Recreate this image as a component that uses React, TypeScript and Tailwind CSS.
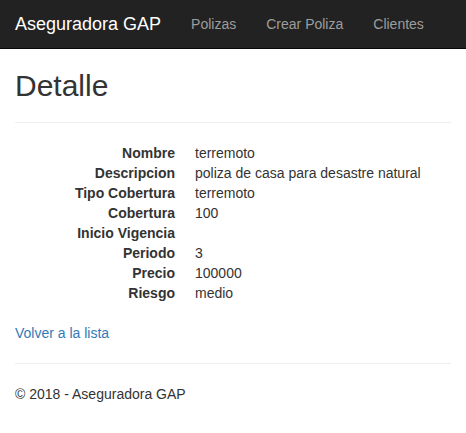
const fields: [string, string][] = [
  ['Nombre', 'terremoto'],
  ['Descripcion', 'poliza de casa para desastre natural'],
  ['Tipo Cobertura', 'terremoto'],
  ['Cobertura', '100'],
  ['Inicio Vigencia', ''],
  ['Periodo', '3'],
  ['Precio', '100000'],
  ['Riesgo', 'medio'],
];

export default function App() {
  return (
    <div className="min-h-screen bg-white font-['Liberation_Sans',Arial,sans-serif] text-[14px] leading-[20px] text-[#333]">
      <nav className="h-[49px] border-b border-[#080808] bg-[#222]">
        <div className="flex px-[15px]">
          <a href="#" className="py-[14px] pr-[15px] text-[18px] leading-[20px] text-white">
            Aseguradora GAP
          </a>
          <NavLink>Polizas</NavLink>
          <NavLink>Crear Poliza</NavLink>
          <NavLink>Clientes</NavLink>
        </div>
      </nav>

      <main className="px-[15px]">
        <h2 className="mt-[20px] mb-[10px] text-[30px] leading-[33px] font-normal">Detalle</h2>
        <div>
          <hr className="my-[20px] border-t border-[#eee]" />
          <dl className="mb-[20px]">
            {fields.map(([label, value]) => (
              <div key={label} className="flex">
                <dt className="w-[160px] shrink-0 text-right font-bold">{label}</dt>
                <dd className="ml-[20px] min-h-[20px]">{value}</dd>
              </div>
            ))}
          </dl>
        </div>
        <p className="mb-[10px]">
          <a href="#" className="text-[#337ab7]">Volver a la lista</a>
        </p>
        <hr className="mt-[20px] mb-[20px] border-t border-[#eee]" />
        <footer>
          <p className="mb-[10px]">© 2018 - Aseguradora GAP</p>
        </footer>
      </main>
    </div>
  );
}

function NavLink({ children }: { children: string }) {
  return (
    <a href="#" className="px-[15px] py-[14px] text-[#9d9d9d]">
      {children}
    </a>
  );
}
